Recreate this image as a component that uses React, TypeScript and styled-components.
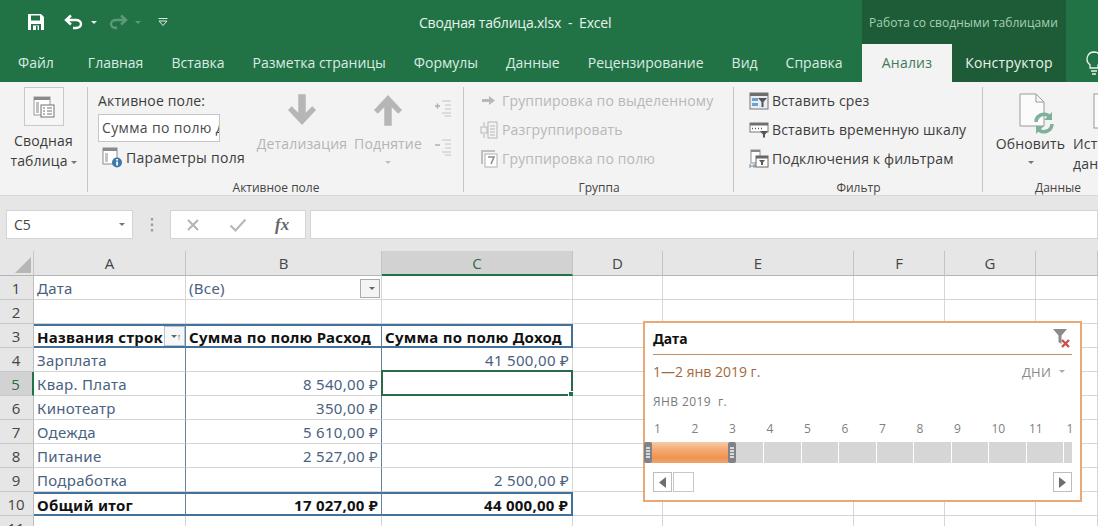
import React from "react";
import styled, { createGlobalStyle } from "styled-components";

const Global = createGlobalStyle`
  html, body { margin: 0; padding: 0; width: 1098px; height: 526px; overflow: hidden; background: #fff; }
  * { box-sizing: border-box; }
  #root { width: 1098px; height: 526px; overflow: hidden; font-family: "Open Sans", "Noto Sans", sans-serif; }
`;

const Page = styled.div`display: flex; flex-direction: column; width: 1098px; height: 526px; position: relative; overflow: hidden;`;

/* title bar */
const TitleBar = styled.div`height: 44px; background: #217346; display: flex; align-items: center; position: relative; flex: none;`;
const Qat = styled.div`display: flex; align-items: center; padding-left: 27px; gap: 0; width: 419px; height: 44px;`;
const QatSlot = styled.span<{ $w: number }>`display: inline-flex; align-items: center; width: ${p => p.$w}px; height: 24px;`;
const DocTitle = styled.div`color: #e9f3ec; font-size: 14px; width: 443px; padding-left: 0; letter-spacing: -0.2px; white-space: pre;`;
const ContextBand = styled.div`width: 204px; height: 44px; background: #1e5c38; color: #a5d0b5; font-size: 12px; display: flex; align-items: center; padding-left: 7px; letter-spacing: 0.05px; white-space: nowrap;`;

/* tab bar */
const TabBar = styled.div`height: 38px; background: #217346; display: flex; align-items: stretch; flex: none; padding-left: 18px;`;
const TabStrip = styled.div`width: 844px; display: flex; flex: none;`;
const Tab = styled.div<{ $gap?: number }>`margin-right: ${p => p.$gap ?? 28}px; display: flex; align-items: center; color: #dcebe2; font-size: 14px; white-space: nowrap; padding-bottom: 1px;`;
const ActiveTab = styled.div`width: 90px; flex: none; display: flex; align-items: center; justify-content: center; background: #f3f3f3; color: #3f7a5a; font-size: 14px; padding-bottom: 1px; letter-spacing: 0.2px;`;
const ContextTab = styled.div`width: 114px; flex: none; display: flex; align-items: center; justify-content: center; background: #1e5c38; color: #eaf3ed; font-size: 14px; padding-bottom: 1px; letter-spacing: 0.2px;`;
const TabIcon = styled.div`display: flex; flex: none; align-items: center; padding-left: 20px;`;

/* ribbon */
const Ribbon = styled.div`height: 114px; background: #f3f3f3; border-bottom: 1px solid #d8d8d8; display: flex; flex: none; overflow: hidden; letter-spacing: 0.15px;`;
const Group = styled.div<{ $w: number }>`width: ${p => p.$w}px; flex: none; display: flex; flex-direction: column; position: relative;
  &::after { content: ""; position: absolute; right: 0; top: 5px; bottom: 3px; width: 1px; background: #c6c6c6; }`;
const GroupBody = styled.div`flex: 1; display: flex; min-height: 0;`;
const GroupLabel = styled.div`height: 15px; font-size: 12px; color: #444; text-align: center; line-height: 15px; flex: none; letter-spacing: 0;`;

const PivotCol = styled.div`width: 87px; display: flex; flex-direction: column; align-items: center; padding-top: 5px;`;
const IconFrame = styled.div`width: 40px; height: 39px; border: 1px solid #c9c9c9; background: #f6f6f6; display: flex; align-items: center; justify-content: center; margin-bottom: 5px;`;
const BigLabel = styled.div<{ $off?: boolean }>`font-size: 14px; line-height: 20px; text-align: center; color: ${p => (p.$off ? "#b4b4b4" : "#3c3c3c")}; white-space: nowrap;`;
const Caret = styled.span<{ $c?: string }>`display: inline-block; width: 0; height: 0; border-left: 3px solid transparent; border-right: 3px solid transparent; border-top: 3px solid ${p => p.$c ?? "#777"}; vertical-align: middle; margin-left: 3px;`;
const BlockCaret = styled(Caret)`display: block; margin: 7px auto 0;`;

const FieldCol = styled.div`width: 168px; padding: 7px 0 0 10px; display: flex; flex-direction: column;`;
const FieldTitle = styled.div`font-size: 14px; color: #3c3c3c; line-height: 24px; height: 24px;`;
const FieldInput = styled.div`width: 122px; height: 28px; border: 1px solid #c6c6c6; background: #fff; font-size: 14px; color: #4a4a4a; line-height: 26px; padding-left: 3px; overflow: hidden; white-space: nowrap; margin-top: 1px; letter-spacing: 0.35px;`;
const FieldParams = styled.div`display: flex; align-items: center; gap: 3px; font-size: 14px; color: #3c3c3c; height: 30px; padding-left: 4px; letter-spacing: 0.3px;`;
const BigBtn = styled.div<{ $w: number }>`width: ${p => p.$w}px; display: flex; flex-direction: column; align-items: center; padding-top: 11px;`;
const RefreshBtn = styled(BigBtn)`padding-left: 5px;`;
const SourceBtn = styled(BigBtn)`align-items: flex-start;`;
const BigIconBox = styled.div`height: 40px; display: flex; align-items: flex-start; justify-content: center; margin-bottom: 1px;`;
const RefreshIconBox = styled(BigIconBox)`padding-left: 12px;`;
const SourceIconBox = styled(BigIconBox)`padding-left: 20px;`;
const SideCol = styled.div`width: 32px; display: flex; flex-direction: column; gap: 22px; padding: 18px 0 0 6px;`;

const ListCol = styled.div`display: flex; flex-direction: column; padding: 4px 0 0 14px;`;
const ListRow = styled.div<{ $off?: boolean }>`display: flex; align-items: center; height: 29px; font-size: 14px; gap: 3px; color: ${p => (p.$off ? "#b8b8b8" : "#3c3c3c")}; white-space: nowrap;`;
const ListIcon = styled.span`display: inline-flex; width: 21px; height: 20px; align-items: center; justify-content: center; flex: none;`;
const DataBtns = styled.div`display: flex;`;

/* formula bar */
const FormulaBar = styled.div`height: 55px; background: #e6e6e6; flex: none; display: flex; padding: 14px 0 0 6px; align-items: flex-start;`;
const NameBox = styled.div`width: 127px; height: 29px; background: #fff; border: 1px solid #d4d4d4; display: flex; align-items: center; justify-content: space-between; padding: 0 7px; font-size: 14px; color: #444;`;
const Dots = styled.div`width: 37px; height: 29px; display: flex; align-items: center; justify-content: center;`;
const FxBox = styled.div`width: 136px; height: 29px; background: #fff; border: 1px solid #d4d4d4; display: flex; align-items: center; gap: 28px; padding: 0 0 0 14px;`;
const FxGlyph = styled.span`font-family: "Liberation Serif", serif; font-style: italic; font-weight: 700; font-size: 17px; color: #666;`;
const FormulaInput = styled.div`flex: 1; height: 29px; background: #fff; border: 1px solid #d4d4d4; margin-left: 4px;`;

/* sheet */
const Sheet = styled.div`flex: 1; display: grid; grid-template-columns: 34px 152px 196px 191px 90px 191px 91px 91px 62px; grid-auto-rows: 24px; grid-template-rows: 25px; background: #fff; font-family: "Noto Sans", "Open Sans", sans-serif; font-size: 15px; letter-spacing: 0.3px; position: relative; overflow: hidden;`;
const Corner = styled.div`background: #e6e6e6; border-right: 1px solid #c8c8c8; border-bottom: 1px solid #b4b4b4; position: relative;
  &::after { content: ""; position: absolute; right: 2px; bottom: 2px; width: 0; height: 0; border-left: 16px solid transparent; border-bottom: 16px solid #b6b6b6; }`;
const ColHead = styled.div<{ $sel?: boolean }>`background: ${p => (p.$sel ? "#d2d2d2" : "#e6e6e6")}; border-right: 1px solid #c4c4c4; border-bottom: ${p => (p.$sel ? "2px solid #217346" : "1px solid #b4b4b4")}; display: flex; align-items: center; justify-content: center; color: ${p => (p.$sel ? "#2b6b48" : "#444")}; font-size: 15px; letter-spacing: 0; font-family: "Open Sans", sans-serif;`;
const RowHead = styled.div<{ $sel?: boolean }>`background: ${p => (p.$sel ? "#d2d2d2" : "#e6e6e6")}; border-bottom: 1px solid #c8c8c8; border-right: ${p => (p.$sel ? "2px solid #217346" : "1px solid #bdbdbd")}; display: flex; align-items: center; justify-content: center; color: ${p => (p.$sel ? "#2b6b48" : "#444")}; font-size: 15px; letter-spacing: 0; font-family: "Open Sans", sans-serif; padding-right: 1px;`;

type CellKind = "plain" | "body" | "head" | "total" | "page";
const Cell = styled.div<{ $k?: CellKind; $right?: boolean; $edge?: boolean }>`
  position: relative; display: flex; align-items: center; white-space: nowrap; overflow: visible; padding: 1px 3px 0 3px;
  justify-content: ${p => (p.$right ? "flex-end" : "flex-start")};
  color: ${p => (p.$k === "head" || p.$k === "total" ? "#111" : "#4a6280")};
  font-weight: ${p => (p.$k === "head" || p.$k === "total" ? 700 : 400)};
  letter-spacing: ${p => (p.$k === "head" || p.$k === "total" ? "0.25px" : "0.3px")};
  border-right: 1px solid ${p => (p.$k === "plain" || p.$k === "page" || !p.$k ? "#d6d6d6" : "#5f84a6")};
  border-bottom: 1px solid #d6d6d6;
  ${p => (p.$k === "head" ? "border-top: 2px solid #44719a; border-bottom: 2px solid #44719a;" : "")}
  ${p => (p.$k === "total" ? "border-top: 2px solid #44719a; border-bottom: 2px solid #44719a;" : "")}
  ${p => (p.$edge ? "border-right: 2px solid #44719a;" : "")}
`;
const BodyLastCell = styled(Cell)`border-right-color: #d6d6d6;`;
const PageDrop = styled.span`position: absolute; right: 1px; top: 3px; width: 20px; height: 19px; border: 1px solid #aaa; background: #f4f4f4; display: flex; align-items: center; justify-content: center;`;
const HeadDrop = styled.span`position: absolute; right: 0; top: 0; width: 21px; height: 20px; border: 1px solid #b5c5d5; background: #f7f7f7; display: flex; align-items: center; justify-content: center; color: #555; font-size: 9px; font-weight: 400;`;
const SelectedBox = styled.span`position: absolute; left: -1px; top: -2px; right: -1px; bottom: -1px; border: 2px solid #2a6a48; pointer-events: none;`;
const Handle = styled.span`position: absolute; right: -3px; bottom: -3px; width: 6px; height: 6px; background: #217346; border: 1px solid #fff;`;

/* timeline */
const Timeline = styled.div`position: absolute; left: 643px; top: 321px; width: 439px; height: 181px; background: #fff; border: 2px solid #eaa877; display: flex; flex-direction: column; padding: 0 8px 0 8px; font-family: "Open Sans", sans-serif;`;
const TlHead = styled.div`height: 32px; border-bottom: 1px solid #c98d62; display: flex; align-items: center; justify-content: space-between; font-weight: 700; font-size: 14px; color: #111; flex: none; padding-bottom: 1px; font-family: "Noto Sans", sans-serif;`;
const TlRange = styled.div`height: 32px; display: flex; align-items: center; justify-content: space-between; font-size: 14px; color: #a5683c; flex: none; padding-top: 1px;`;
const TlUnit = styled.span`color: #8a8a8a; font-size: 13px; padding-right: 7px; display: inline-flex; align-items: center; gap: 5px; letter-spacing: 0.2px;`;
const TlMonth = styled.div`height: 28px; font-size: 12px; color: #7a7a7a; display: flex; align-items: center; flex: none; letter-spacing: 0.4px; white-space: pre;`;
const TlDays = styled.div`height: 27px; display: flex; flex: none; overflow: hidden; margin-left: -9px;`;
const TlDay = styled.span`flex: 0 0 37.5px; font-size: 12px; color: #808080; padding-left: 10px; display: flex; align-items: center;`;
const TlBar = styled.div`height: 21px; display: flex; position: relative; flex: none; overflow: visible; margin-left: -8px;`;
const TlCell = styled.span<{ $w: number; $last?: boolean }>`flex: 0 0 ${p => p.$w}px; height: 21px; background: #d6d6d6; border-right: ${p => (p.$last ? "none" : "1px solid #fff")};`;
const TlSel = styled.span`position: absolute; left: 1px; top: 0; width: 87px; height: 21px; background: linear-gradient(180deg, #f7cba8 0%, #f4ab76 35%, #ef9350 75%, #f0a36c 100%);`;
const TlGrip = styled.span<{ $side: "l" | "r" }>`position: absolute; ${p => (p.$side === "l" ? "left: -2px;" : "right: -3px;")} top: 0; width: 8px; height: 21px; border-radius: 2px; background: #7f8387; display: flex; flex-direction: column; justify-content: center; align-items: center; gap: 1px;
  & > i { display: block; width: 4px; height: 2px; background: #d9dadb; }`;
const TlScroll = styled.div`height: 21px; margin-top: 9px; display: flex; justify-content: space-between; flex: none;`;
const TlLeft = styled.div`display: flex; gap: 1px;`;
const TlBtn = styled.div`width: 19px; height: 20px; border: 1px solid #bdbdbd; background: #fff; display: flex; align-items: center; justify-content: center;`;
const TlThumb = styled.div`width: 21px; height: 20px; border: 1px solid #c8c8c8; background: #fff;`;

/* icons */
const SaveIcon = () => (
  <svg width="18" height="18" viewBox="0 0 18 18"><path d="M1 1h13l3 3v13H1z" fill="#fff" /><rect x="4" y="2.5" width="9" height="5" fill="#217346" /><rect x="4" y="11" width="10" height="6" fill="#217346" /><rect x="6" y="12.5" width="6" height="4.5" fill="#fff" /><rect x="9" y="13" width="1.6" height="4" fill="#217346" /></svg>
);
const UndoIcon = ({ c }: { c: string }) => (
  <svg width="20" height="16" viewBox="0 0 20 16"><path d="M7 1.5 2 6l5 4.5M2.5 6H12c3 0 5 1.800 5 4s-2 4-5 4H9" fill="none" stroke={c} strokeWidth="2.4" /></svg>
);
const RedoIcon = ({ c }: { c: string }) => (
  <svg width="20" height="16" viewBox="0 0 20 16"><path d="M13 1.5 18 6l-5 4.5M17.5 6H8c-3 0-5 1.800-5 4s2 4 5 4h1" fill="none" stroke={c} strokeWidth="2.4" /></svg>
);
const CustomizeIcon = () => (
  <svg width="10" height="9" viewBox="0 0 10 9"><path d="M0.5 0.5h9" stroke="#dcebe2" /><path d="M1 3l4 4.5L9 3z" fill="none" stroke="#dcebe2" /></svg>
);
const Bulb = () => (
  <svg width="16" height="24" viewBox="0 0 16 24"><path d="M8 1a7 7 0 0 0-4 12.7V17h8v-3.3A7 7 0 0 0 8 1zM5 20h6M6 23h4" fill="none" stroke="#e6f1ea" strokeWidth="1.3" /></svg>
);
const PivotIcon = () => (
  <svg width="22" height="22" viewBox="0 0 22 22"><rect x="1" y="1" width="16" height="18" fill="#fff" stroke="#9a9a9a" /><rect x="1" y="1" width="16" height="3" fill="#8a8a8a" /><rect x="3" y="6" width="3" height="11" fill="#c0c0c0" /><rect x="8" y="9" width="13" height="12" fill="#fff" stroke="#707070" /><path d="M10 12h2M14 12h5M10 15h2M14 15h5M10 18h2M14 18h5" stroke="#707070" /></svg>
);
const ParamsIcon = () => (
  <svg width="21" height="21" viewBox="0 0 21 21"><rect x="1" y="1" width="14" height="16" fill="#fff" stroke="#8c8c8c" /><rect x="1" y="1" width="14" height="3" fill="#8a8a8a" /><rect x="3" y="6" width="3" height="9" fill="#c4c4c4" /><circle cx="15" cy="15.5" r="5" fill="#3f78ab" /><rect x="14.2" y="14.5" width="1.8" height="4" fill="#fff" /><rect x="14.2" y="12" width="1.8" height="1.6" fill="#fff" /></svg>
);
const ArrowDown = () => (
  <svg width="28" height="34" viewBox="0 0 30 36"><path d="M11 1h8v20l7-7 4 4-15 16L0 18l4-4 7 7z" fill="#b6b6b6" /></svg>
);
const ArrowUp = () => (
  <svg width="28" height="34" viewBox="0 0 30 36"><path d="M11 35h8V15l7 7 4-4L15 2 0 18l4 4 7-7z" fill="#b6b6b6" /></svg>
);
const ExpandIcon = ({ plus }: { plus: boolean }) => (
  <svg width="18" height="17" viewBox="0 0 18 17"><path d={plus ? "M1 6h5M3.5 3.5v5" : "M1 6h5"} stroke="#b0b0b0" strokeWidth="1.5" /><path d="M8 1h9M11 5h6M11 9h6M8 13h9M11 16h6" stroke="#c4c4c4" /></svg>
);
const GroupArrow = () => (
  <svg width="14" height="11" viewBox="0 0 14 11"><path d="M0 4h7V1l6 4.5L7 10V7H0z" fill="#b8b8b8" /></svg>
);
const UngroupIcon = () => (
  <svg width="18" height="18" viewBox="0 0 18 18"><rect x="8" y="1" width="9" height="16" fill="none" stroke="#b5b5b5" /><path d="M10 5h5M10 8h5M10 11h5M10 14h5" stroke="#b5b5b5" /><rect x="1" y="6" width="6" height="6" fill="none" stroke="#b5b5b5" /><path d="M4 1v4M4 13v4" stroke="#b5b5b5" /></svg>
);
const GroupFieldIcon = () => (
  <svg width="18" height="19" viewBox="0 0 18 19"><path d="M1 1h14v2H3v12H1z" fill="#c0c0c0" /><rect x="5" y="5" width="12" height="13" fill="#fff" stroke="#b0b0b0" /><path d="M8 8h6l-3 7" fill="none" stroke="#8f8f8f" strokeWidth="1.6" /></svg>
);
const SliceIcon = () => (
  <svg width="20" height="18" viewBox="0 0 20 18"><rect x="1" y="1" width="18" height="16" fill="#e8eef3" stroke="#777" /><rect x="1" y="1" width="18" height="3" fill="#6f6f6f" /><rect x="3" y="6" width="6" height="3" fill="#6aa2d0" /><rect x="3" y="11" width="6" height="3" fill="#6aa2d0" /><path d="M9 6h9l-3.500 4v5h-2v-5z" fill="#555" /></svg>
);
const TimeIcon = () => (
  <svg width="20" height="16" viewBox="0 0 20 16"><rect x="1" y="1" width="18" height="9" fill="#fff" stroke="#777" /><rect x="1" y="1" width="18" height="2.5" fill="#6f6f6f" /><path d="M3 6.500h1M6 6.500h1M9 6.500h1M12 6.500h1" stroke="#555" strokeWidth="1.6" /><path d="M11 9h8l-3 3.500v3h-2v-3z" fill="#555" /></svg>
);
const ConnIcon = () => (
  <svg width="20" height="20" viewBox="0 0 20 20"><rect x="2" y="1" width="9" height="13" fill="#fff" stroke="#909090" /><rect x="2" y="1" width="9" height="2" fill="#888" /><path d="M1 15v4M5 15v4M1 17h8" stroke="#6c8fae" /><rect x="7" y="7" width="12" height="11" fill="#fff" stroke="#666" /><rect x="7" y="7" width="12" height="2.5" fill="#666" /><path d="M10 11h6l-2 2.500V16h-2v-2.500z" fill="#5a5a5a" /></svg>
);
const RefreshIcon = () => (
  <svg width="36" height="42" viewBox="0 0 36 42"><path d="M1 1h16l8 8v24H1z" fill="#fbfbfb" stroke="#9a9a9a" /><path d="M17 1v8h8" fill="none" stroke="#9a9a9a" /><path d="M17 29a8 8 0 0 1 14-5" fill="none" stroke="#7fb09a" strokeWidth="3.5" /><path d="M33 19v8h-8z" fill="#7fb09a" /><path d="M33 31a8 8 0 0 1-14 5" fill="none" stroke="#7fb09a" strokeWidth="3.5" /><path d="M17 41v-8h8z" fill="#7fb09a" /></svg>
);
const SourceIcon = () => (
  <svg width="30" height="40" viewBox="0 0 30 40"><rect x="1" y="1" width="30" height="34" fill="#fbfbfb" stroke="#9a9a9a" /><path d="M5 8h26M5 14h26M5 20h26M5 26h26M12 8v22M20 8v22" stroke="#c4c4c4" /></svg>
);
const CloseIcon = () => (
  <svg width="16" height="16" viewBox="0 0 16 16"><path d="M3 3l10 10M13 3L3 13" stroke="#b4b4b4" strokeWidth="2" /></svg>
);
const CheckIcon = () => (
  <svg width="18" height="16" viewBox="0 0 18 16"><path d="M1.500 8.500l5 5L16.500 2.500" fill="none" stroke="#b8b8b8" strokeWidth="2.2" /></svg>
);
const DotsIcon = () => (
  <svg width="4" height="14" viewBox="0 0 4 14"><path d="M2 0v2.500M2 5.500v2.500M2 11v2.500" stroke="#a0a0a0" strokeWidth="2.4" /></svg>
);
const ClearFilter = () => (
  <svg width="20" height="20" viewBox="0 0 20 20"><path d="M1 1h14l-5.500 6.500V16L6.500 14V7.500z" fill="#8a8a8a" /><path d="M10 12l7 7M17 12l-7 7" stroke="#c8504b" strokeWidth="2.4" /></svg>
);
const Tri = ({ dir }: { dir: "l" | "r" }) => (
  <svg width="7" height="11" viewBox="0 0 7 11"><path d={dir === "l" ? "M7 0v11L0 5.500z" : "M0 0v11l7-5.500z"} fill="#6e6e6e" /></svg>
);

const tabs: [string, number?][] = [
  ["Файл", 34], ["Главная"], ["Вставка"], ["Разметка страницы"],
  ["Формулы"], ["Данные"], ["Рецензирование"], ["Вид"], ["Справка", 0],
];
const cols = ["A", "B", "C", "D", "E", "F", "G", ""];
type Row = { a: string; b?: string; c?: string };
const body: Row[] = [
  { a: "Зарплата", c: "41 500,00 ₽" },
  { a: "Квар. Плата", b: "8 540,00 ₽" },
  { a: "Кинотеатр", b: "350,00 ₽" },
  { a: "Одежда", b: "5 610,00 ₽" },
  { a: "Питание", b: "2 527,00 ₽" },
  { a: "Подработка", c: "2 500,00 ₽" },
];
const trailing = [0, 1, 2, 3, 4];
const days = ["1", "2", "3", "4", "5", "6", "7", "8", "9", "10", "11", "12"];
const barWidths = [44, 37.5, 37.5, 37.5, 37.5, 37.5, 37.5, 37.5, 37.5, 37.5, 37.5, 8];

const Blanks = () => (
  <>{trailing.map(i => <Cell key={i} />)}</>
);

export default function App() {
  return (
    <Page>
      <Global />
      <TitleBar>
        <Qat>
          <QatSlot $w={37}><SaveIcon /></QatSlot>
          <QatSlot $w={24}><UndoIcon c="#fff" /></QatSlot>
          <QatSlot $w={20}><Caret $c="#e8f2ec" /></QatSlot>
          <QatSlot $w={24}><RedoIcon c="#5e9a78" /></QatSlot>
          <QatSlot $w={26}><Caret $c="#5e9a78" /></QatSlot>
          <QatSlot $w={14}><CustomizeIcon /></QatSlot>
        </Qat>
        <DocTitle>Сводная таблица.xlsx  -  Excel</DocTitle>
        <ContextBand>Работа со сводными таблицами</ContextBand>
      </TitleBar>
      <TabBar>
        <TabStrip>
          {tabs.map(([t, g]) => <Tab key={t} $gap={g}>{t}</Tab>)}
        </TabStrip>
        <ActiveTab>Анализ</ActiveTab>
        <ContextTab>Конструктор</ContextTab>
        <TabIcon><Bulb /></TabIcon>
      </TabBar>
      <Ribbon>
        <Group $w={88}>
          <GroupBody>
            <PivotCol>
              <IconFrame><PivotIcon /></IconFrame>
              <BigLabel>Сводная</BigLabel>
              <BigLabel>таблица<Caret /></BigLabel>
            </PivotCol>
          </GroupBody>
        </Group>
        <Group $w={376}>
          <GroupBody>
            <FieldCol>
              <FieldTitle>Активное поле:</FieldTitle>
              <FieldInput>Сумма по полю Д</FieldInput>
              <FieldParams><ParamsIcon />Параметры поля</FieldParams>
            </FieldCol>
            <BigBtn $w={92}>
              <BigIconBox><ArrowDown /></BigIconBox>
              <BigLabel $off>Детализация</BigLabel>
            </BigBtn>
            <BigBtn $w={80}>
              <BigIconBox><ArrowUp /></BigIconBox>
              <BigLabel $off>Поднятие</BigLabel>
              <BlockCaret $c="#c0c0c0" />
            </BigBtn>
            <SideCol>
              <ExpandIcon plus />
              <ExpandIcon plus={false} />
            </SideCol>
          </GroupBody>
          <GroupLabel>Активное поле</GroupLabel>
        </Group>
        <Group $w={270}>
          <GroupBody>
            <ListCol>
              <ListRow $off><ListIcon><GroupArrow /></ListIcon>Группировка по выделенному</ListRow>
              <ListRow $off><ListIcon><UngroupIcon /></ListIcon>Разгруппировать</ListRow>
              <ListRow $off><ListIcon><GroupFieldIcon /></ListIcon>Группировка по полю</ListRow>
            </ListCol>
          </GroupBody>
          <GroupLabel>Группа</GroupLabel>
        </Group>
        <Group $w={249}>
          <GroupBody>
            <ListCol>
              <ListRow><ListIcon><SliceIcon /></ListIcon>Вставить срез</ListRow>
              <ListRow><ListIcon><TimeIcon /></ListIcon>Вставить временную шкалу</ListRow>
              <ListRow><ListIcon><ConnIcon /></ListIcon>Подключения к фильтрам</ListRow>
            </ListCol>
          </GroupBody>
          <GroupLabel>Фильтр</GroupLabel>
        </Group>
        <Group $w={150}>
          <GroupBody>
            <DataBtns>
              <RefreshBtn $w={90}>
                <RefreshIconBox><RefreshIcon /></RefreshIconBox>
                <BigLabel>Обновить</BigLabel>
                <BlockCaret />
              </RefreshBtn>
              <SourceBtn $w={60}>
                <SourceIconBox><SourceIcon /></SourceIconBox>
                <BigLabel>Источник</BigLabel>
                <BigLabel>данных</BigLabel>
              </SourceBtn>
            </DataBtns>
          </GroupBody>
          <GroupLabel>Данные</GroupLabel>
        </Group>
      </Ribbon>
      <FormulaBar>
        <NameBox>C5<Caret /></NameBox>
        <Dots><DotsIcon /></Dots>
        <FxBox><CloseIcon /><CheckIcon /><FxGlyph>fx</FxGlyph></FxBox>
        <FormulaInput />
      </FormulaBar>
      <Sheet>
        <Corner />
        {cols.map((c, i) => <ColHead key={i} $sel={c === "C"}>{c}</ColHead>)}

        <RowHead>1</RowHead>
        <Cell $k="page">Дата</Cell>
        <Cell $k="page">(Все)<PageDrop><Caret $c="#666" /></PageDrop></Cell>
        <Cell /><Blanks />

        <RowHead>2</RowHead>
        <Cell /><Cell /><Cell /><Blanks />

        <RowHead>3</RowHead>
        <Cell $k="head">Названия строк<HeadDrop><Caret $c="#666" />↑</HeadDrop></Cell>
        <Cell $k="head">Сумма по полю Расход</Cell>
        <Cell $k="head" $edge>Сумма по полю Доход</Cell>
        <Blanks />

        {body.map((r, i) => (
          <React.Fragment key={r.a}>
            <RowHead $sel={i === 1}>{i + 4}</RowHead>
            <Cell $k="body">{r.a}</Cell>
            <Cell $k="body" $right>{r.b}</Cell>
            <BodyLastCell $right $k="body">
              {r.c}
              {i === 1 && <SelectedBox><Handle /></SelectedBox>}
            </BodyLastCell>
            <Blanks />
          </React.Fragment>
        ))}

        <RowHead>10</RowHead>
        <Cell $k="total">Общий итог</Cell>
        <Cell $k="total" $right>17 027,00 ₽</Cell>
        <Cell $k="total" $right $edge>44 000,00 ₽</Cell>
        <Blanks />

        <RowHead>11</RowHead>
        <Cell /><Cell /><Cell /><Blanks />
      </Sheet>
      <Timeline>
        <TlHead>Дата<ClearFilter /></TlHead>
        <TlRange>1—2 янв 2019 г.<TlUnit>ДНИ<Caret $c="#aaa" /></TlUnit></TlRange>
        <TlMonth>ЯНВ 2019  г.</TlMonth>
        <TlDays>{days.map(d => <TlDay key={d}>{d}</TlDay>)}</TlDays>
        <TlBar>
          {barWidths.map((w, i) => <TlCell key={i} $w={w} $last={i === barWidths.length - 1} />)}
          <TlSel>
            <TlGrip $side="l"><i /><i /><i /><i /></TlGrip>
            <TlGrip $side="r"><i /><i /><i /><i /></TlGrip>
          </TlSel>
        </TlBar>
        <TlScroll>
          <TlLeft><TlBtn><Tri dir="l" /></TlBtn><TlThumb /></TlLeft>
          <TlBtn><Tri dir="r" /></TlBtn>
        </TlScroll>
      </Timeline>
    </Page>
  );
}
